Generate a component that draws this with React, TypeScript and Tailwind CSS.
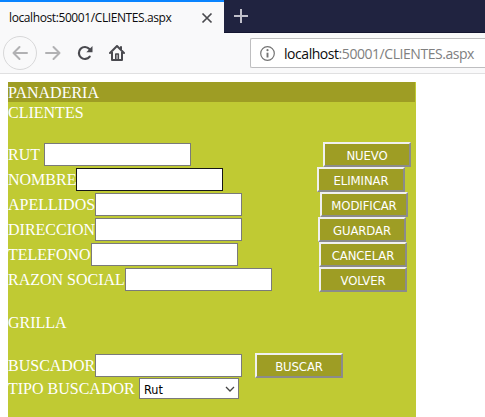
import React from "react";

const buttonStyle =
  "box-border h-[25px] w-[88px] shrink-0 border-2 border-t-[#f0f0f0] border-l-[#f0f0f0] border-r-[#8b8b8b] border-b-[#8b8b8b] bg-[#9e9d24] p-0 pt-[2px] text-center font-['DejaVu_Sans_Condensed','DejaVu_Sans',sans-serif] text-[13px] leading-[19px] tracking-[-0.1px] text-white [font-stretch:condensed]";

type RowProps = {
  label: string;
  labelWidth: string;
  gap: string;
  action: string;
  focused?: boolean;
};

const rows: RowProps[] = [
  { label: "RUT", labelWidth: "w-[36px]", gap: "ml-[132px]", action: "NUEVO" },
  { label: "NOMBRE", labelWidth: "w-[68px]", gap: "ml-[94px]", action: "ELIMINAR", focused: true },
  { label: "APELLIDOS", labelWidth: "w-[87px]", gap: "ml-[78px]", action: "MODIFICAR" },
  { label: "DIRECCION", labelWidth: "w-[87px]", gap: "ml-[76px]", action: "GUARDAR" },
  { label: "TELEFONO", labelWidth: "w-[83px]", gap: "ml-[81px]", action: "CANCELAR" },
  { label: "RAZON SOCIAL", labelWidth: "w-[117px]", gap: "ml-[47px]", action: "VOLVER" },
];

function Row({ label, labelWidth, gap, action, focused }: RowProps) {
  return (
    <div className="flex h-[25px] items-center">
      <label className={`${labelWidth} shrink-0 whitespace-nowrap leading-[25px]`}>{label}</label>
      <input
        aria-label={label}
        className={`h-[23px] w-[147px] shrink-0 border bg-white px-1 text-[13px] text-black outline-none ${
          focused ? "border-[#171717]" : "border-[#7a7a7a]"
        }`}
      />
      <button className={`${buttonStyle} ${gap}`}>{action}</button>
    </div>
  );
}

function Browser() {
  return (
    <header className="font-['Open_Sans','Noto_Sans',sans-serif]">
      <div className="flex h-[33px] bg-[#202340]">
        <div className="flex w-[224px] shrink-0 items-center border-t-2 border-[#0a84ff] bg-[#f9f9fa] pl-[9px]">
          <span className="w-[192px] whitespace-nowrap text-[12px] leading-[20px] tracking-[-0.4px] text-[#0c0c0d]">
            localhost:50001/CLIENTES.aspx
          </span>
          <svg width="12" height="12" viewBox="0 0 12 12" fill="none" stroke="#4a4a4f" strokeWidth="1.7">
            <path d="M1.5 1.5l9 9M10.5 1.5l-9 9" />
          </svg>
        </div>
        <div className="flex flex-1 border-b border-[#131530] pl-[9px] pt-[8px]">
          <svg width="16" height="16" viewBox="0 0 16 16" fill="none" stroke="#c0c0ca" strokeWidth="2">
            <path d="M1 8h14M8 1v14" />
          </svg>
        </div>
      </div>
      <div className="flex h-[41px] items-center border-b border-[#e0e0e1] bg-[#f9f9fa] pl-[3px]">
        <div className="flex h-[34px] w-[34px] shrink-0 items-center justify-center rounded-full border border-[#d8d8d9]">
          <svg width="16" height="16" viewBox="0 0 16 16" fill="none" stroke="#b1b1b3" strokeWidth="2" strokeLinecap="round" strokeLinejoin="round">
            <path d="M15 8H1.5M7.5 2l-6 6 6 6" />
          </svg>
        </div>
        <svg className="ml-[8px] shrink-0" width="16" height="16" viewBox="0 0 16 16" fill="none" stroke="#b1b1b3" strokeWidth="2" strokeLinecap="round" strokeLinejoin="round">
          <path d="M1 8h13.5M8.5 2l6 6-6 6" />
        </svg>
        <svg className="ml-[16px] shrink-0" width="16" height="16" viewBox="0 0 16 16">
          <path d="M12.7 11.6A6 6 0 1 1 12.4 4" fill="none" stroke="#4a4a4f" strokeWidth="2.2" strokeLinecap="round" />
          <path d="M15.5 1v6.2H9.3z" fill="#4a4a4f" />
        </svg>
        <svg className="ml-[16px] shrink-0" width="16" height="16" viewBox="0 0 16 16" fill="none" stroke="#4a4a4f" strokeWidth="2" strokeLinejoin="round" strokeLinecap="round">
          <path d="M1 8l7-7 7 7M3 7v8h10V7M12 2v3" />
          <path d="M6.8 14.5V9h2.5v5.5" strokeWidth="1.6" />
        </svg>
        <div className="ml-[125px] flex h-[30px] min-w-0 flex-1 items-center rounded-l-[2px] border border-r-0 border-[#bebec0] bg-white pl-[9px]">
          <svg className="shrink-0" width="15" height="15" viewBox="0 0 15 15">
            <circle cx="7.5" cy="7.5" r="6.8" fill="none" stroke="#737373" strokeWidth="1.2" />
            <circle cx="7.5" cy="4.2" r="1.1" fill="#737373" />
            <path d="M7.5 6.7V11.5" stroke="#737373" strokeWidth="1.9" />
          </svg>
          <span className="ml-[9px] mt-[2px] whitespace-nowrap text-[14px] leading-[20px] tracking-[-0.45px] text-[#808080]">
            <span className="text-[#0c0c0d]">localhost</span>:50001/CLIENTES.aspx
          </span>
        </div>
      </div>
    </header>
  );
}

export default function App() {
  return (
    <div className="h-[417px] w-[485px] overflow-hidden bg-white">
      <Browser />
      <main className="ml-2 mt-2 h-[335px] w-[408px] bg-[#c0ca33] font-['Liberation_Serif',serif] text-[16px] text-white">
        <h1 className="h-[20px] w-[407px] bg-[#9e9d24] leading-[22px]">PANADERIA</h1>
        <h2 className="h-[40px] leading-[22px]">CLIENTES</h2>
        {rows.map((row) => (
          <Row key={row.label} {...row} />
        ))}
        <h2 className="mt-[20px] h-[41px] leading-[21px]">GRILLA</h2>
        <Row label="BUSCADOR" labelWidth="w-[87px]" gap="ml-[13px]" action="BUSCAR" />
        <div className="flex h-[22px]">
          <span className="w-[131px] leading-[22px]">TIPO BUSCADOR</span>
          <button className="flex h-[21px] w-[100px] items-center justify-between border border-[#7a7a7a] bg-white pl-[4px] pr-[3px] font-['DejaVu_Sans_Condensed','DejaVu_Sans',sans-serif] text-[12.5px] leading-[17px] text-black [font-stretch:condensed]">
            <span className="pt-[2px]">Rut</span>
            <svg width="10" height="6" viewBox="0 0 10 6" fill="none" stroke="#444" strokeWidth="1.3">
              <path d="M1 1l4 4 4-4" />
            </svg>
          </button>
        </div>
      </main>
    </div>
  );
}
